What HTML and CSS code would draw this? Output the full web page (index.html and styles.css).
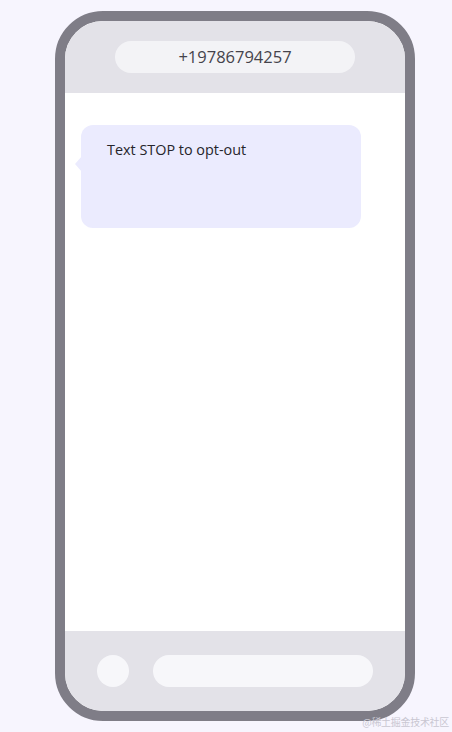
FILE: index.html
```html
<!DOCTYPE html>
<html>
<head>
<meta charset="utf-8">
<link rel="stylesheet" href="styles.css">
</head>
<body>
<div class="page">
  <div class="phone">
    <div class="top">
      <div class="number">+19786794257</div>
    </div>
    <div class="body">
      <div class="bubble">Text STOP to opt-out</div>
    </div>
    <div class="bottom">
      <div class="dot"></div>
      <div class="input"></div>
    </div>
  </div>
  <div class="mark">@稀土掘金技术社区</div>
</div>
</body>
</html>
```
FILE: styles.css
```css
html, body {
  margin: 0;
  padding: 0;
  background: #f7f5fe;
}
.page {
  position: relative;
  width: 452px;
  height: 732px;
  padding-top: 11px;
  padding-left: 55px;
  box-sizing: border-box;
  font-family: "Segoe UI", "Open Sans", "Noto Sans", sans-serif;
}
.phone {
  width: 360px;
  height: 710px;
  box-sizing: border-box;
  border: 10px solid #7f7d87;
  border-radius: 48px;
  overflow: hidden;
  display: flex;
  flex-direction: column;
  background: #fff;
}
.top {
  height: 72px;
  background: #e3e2e8;
  display: flex;
  justify-content: center;
  align-items: center;
  flex: none;
}
.number {
  width: 240px;
  height: 32px;
  border-radius: 16px;
  background: #f3f3f6;
  color: #45434b;
  font-size: 16.5px;
  line-height: 32px;
  text-align: center;
}
.body {
  flex: 1;
  background: #fff;
  padding: 32px 16px 0;
}
.bubble {
  position: relative;
  width: 280px;
  height: 103px;
  box-sizing: border-box;
  background: #ebebfe;
  border-radius: 12px;
  padding: 14px 26px;
  color: #26252b;
  font-size: 14.4px;
  line-height: 22px;
}
.bubble::before {
  content: "";
  position: absolute;
  left: -6px;
  top: 31px;
  width: 0;
  height: 0;
  border-top: 8px solid transparent;
  border-bottom: 8px solid transparent;
  border-right: 7px solid #ebebfe;
}
.bottom {
  height: 80px;
  background: #e3e2e8;
  flex: none;
  display: flex;
  align-items: center;
  gap: 24px;
  padding: 0 32px;
}
.dot {
  width: 32px;
  height: 32px;
  border-radius: 50%;
  background: #f7f7fa;
  flex: none;
}
.input {
  flex: 1;
  height: 32px;
  border-radius: 16px;
  background: #f7f7fa;
}
.mark {
  position: absolute;
  right: 3px;
  bottom: 4px;
  font-size: 10px;
  line-height: 12px;
  color: #c9c7d2;
  font-family: "Noto Sans CJK SC", serif;
  letter-spacing: -0.3px;
}
```
